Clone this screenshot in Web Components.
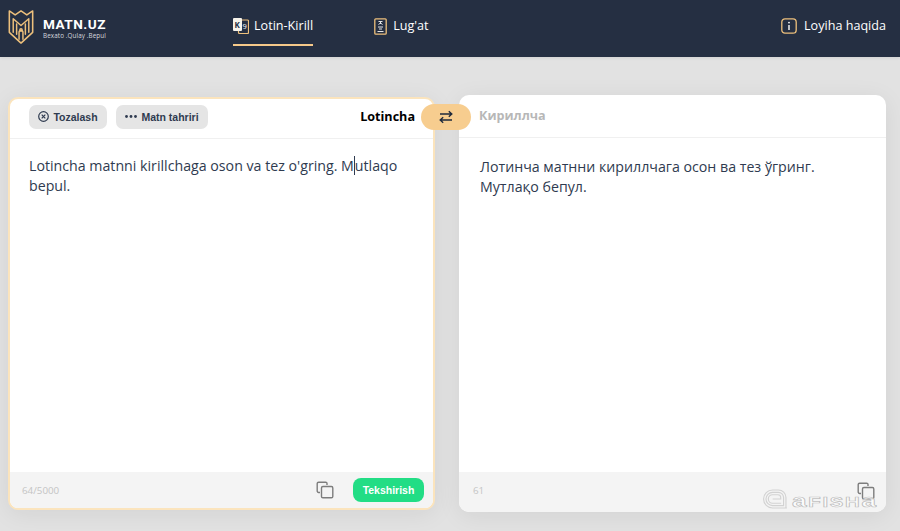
<!DOCTYPE html>
<html lang="uz"><head><meta charset="utf-8"><title>Matn.uz</title>
<style>
html,body{margin:0;height:531px;overflow:hidden}
body{background:#e2e2e2;font-family:"Open Sans","Noto Sans",sans-serif}
</style></head><body>
<app-shell>
  <site-header></site-header>
  <main-area>
    <text-card active count="64/5000" title-text="Lotincha" tools check><span>Lotincha matnni kirillchaga oson va tez o'gring. M</span><text-caret></text-caret><span>utlaqo</span><br><span>bepul.</span></text-card>
    <text-card count="61" title-text="Кириллча">Лотинча матнни кириллчага осон ва тез ўгринг. Мутлақо бепул.</text-card>
    <swap-button></swap-button>
  </main-area>
  <afisha-mark></afisha-mark>
</app-shell>
<script>
function def(name,html){customElements.define(name,class extends HTMLElement{constructor(){super();this.attachShadow({mode:'open'}).innerHTML=typeof html==='function'?html(this):html;}})}
def('app-shell',`<style>:host{display:flex;flex-direction:column;position:relative;width:900px;height:531px;overflow:hidden}</style><slot></slot>`);
const gold='#edc07c';
def('site-header',`<style>
:host{display:flex;align-items:center;height:57px;background:#252f42;color:#fff;flex:none;box-sizing:border-box;padding-left:8px;padding-right:14px;box-shadow:0 1px 3px rgba(0,0,0,.08)}
.logo{display:flex;align-items:center;gap:9px;width:225px;flex:none;margin-top:-3px}
.name{font:700 13.600px/14px Roboto,"Open Sans",sans-serif;letter-spacing:.5px;margin-top:1px}
.tag{font:400 6.300px/7px "Open Sans",sans-serif;color:#d5d8de;letter-spacing:.1px;white-space:nowrap;margin-top:1px}
nav{display:flex;flex:1}
a{display:flex;align-items:center;gap:5px;font:400 12.600px/18px "Open Sans",sans-serif;color:#fff;position:relative;height:57px;box-sizing:border-box;padding-bottom:5px}
a.on::after{content:"";position:absolute;left:0;right:0;bottom:11px;height:2px;background:#f6c98a}
a.l2{margin-left:61px;gap:6px}
a.info{gap:7px}
svg{display:block;flex:none}
</style>
<div class="logo">
<svg width="26" height="36" viewBox="0 0 26 37" fill="none" stroke="${gold}" stroke-width="1.500" stroke-linejoin="round" stroke-linecap="round">
<path d="M1 2 L7 6 L13 2 L19 6 L25 2 V24 L13 35 L1 24 Z" stroke-width="1.600"/>
<path d="M5 24 V10 L13 17 L21 10 V24"/><path d="M8.500 26 V15.500 M17.500 26 V15.500"/>
<path d="M11 31 V24 A2 2 0 0 1 15 24 V31"/><circle cx="13" cy="21.500" r="1.200"/>
</svg>
<div><div class="name">MATN.UZ</div><div class="tag">Bexato .Qulay .Bepul</div></div>
</div>
<nav>
<a class="on"><svg width="16" height="16" viewBox="0 0 16 16"><rect x="5.500" y="2" width="10" height="13.500" rx="1" fill="#252f42" stroke="${gold}" stroke-width="1.200"/><rect x="0" y="0" width="9" height="13" rx="1" fill="#f7f3ea"/><text x="1.500" y="10" font-size="8" font-weight="700" font-family="Open Sans" fill="#252f42">K</text><text x="9.500" y="11" font-size="7.500" font-family="Open Sans" fill="#fff">9</text></svg>Lotin-Kirill</a>
<a class="l2"><svg width="13" height="17" viewBox="0 0 13 17"><rect x=".8" y=".8" width="11.400" height="15.400" rx="1" fill="#252f42" stroke="${gold}" stroke-width="1.300"/><path d="M4.500 3.500h4M6.500 3v3M4.500 6.500L6.500 5l2 1.500M4 9h5M5 11h3M3.500 13.500h6" stroke="#e6e6e6" stroke-width="1" fill="none"/></svg>Lug'at</a>
</nav>
<a class="info"><svg width="16" height="16" viewBox="0 0 16 16" fill="none"><rect x=".8" y=".8" width="14.400" height="14.400" rx="3.200" stroke="${gold}" stroke-width="1.300"/><path d="M8 7v5" stroke="#fff" stroke-width="1.400"/><circle cx="8" cy="4.600" r=".9" fill="#fff"/></svg>Loyiha haqida</a>`);
def('main-area',`<style>:host{display:flex;align-items:stretch;position:relative;gap:24px;padding:38px 14px 19px 8px;flex:1;min-height:0;box-sizing:border-box}</style><slot></slot>`);
def('text-card',h=>{
const active=h.hasAttribute('active'),tools=h.hasAttribute('tools'),check=h.hasAttribute('check'),t=h.getAttribute('title-text');
return `<style>
:host{display:flex;flex-direction:column;flex:none;box-sizing:border-box;background:#fff;border-radius:10px;overflow:hidden;box-shadow:0 4px 24px rgba(0,0,0,.07);width:427px}
:host([active]){margin-top:2px;margin-bottom:2px;border:2px solid #fbe4bd}
.top{height:43px;flex:none;display:flex;align-items:center;border-bottom:1px solid #f0f0f0;box-sizing:border-box;padding:0 20px;gap:9px}
:host([active]) .top{height:40px;padding:0 18px 4px 19px}
button{all:unset;display:flex;align-items:center;justify-content:center;gap:4px;height:24px;border-radius:7px;background:#e5e5e5;color:#2f3b50;font:700 10.500px "Liberation Sans",sans-serif;box-sizing:border-box;width:78px}
button.m{width:92px}
h2{margin:0;font:700 12.600px/18px "Open Sans",sans-serif}
.ttl{margin-left:auto;color:#000}
.ttr{color:#b7b7b7}
.body{flex:1;padding:${active?'17px 19px':'19px 21px'};font:400 14.200px/20px "Open Sans",sans-serif;color:#2f3b50}
.foot{height:${active?36:40}px;flex:none;background:#f4f4f4;display:flex;align-items:center;box-sizing:border-box;padding:0 ${active?'9px 0 12px':'11px 3px 14px'}}
.c{font:400 9.800px "Open Sans",sans-serif;color:#c4c4c4;flex:1}
.chk{all:unset;background:#22dd85;color:#fff;font:700 10.500px "Liberation Sans",sans-serif;border-radius:8px;width:71px;height:24px;display:flex;align-items:center;justify-content:center;margin-left:19px}
svg{display:block;flex:none}
</style>
<div class="top">
${tools?`<button><svg width="11" height="11" viewBox="0 0 11 11" fill="none" stroke="#2f3b50" stroke-width="1.200"><circle cx="5.500" cy="5.500" r="4.800"/><path d="M3.700 3.700l3.600 3.600M7.300 3.700L3.700 7.300"/></svg>Tozalash</button><button class="m"><svg width="12" height="3" viewBox="0 0 12 3" fill="#2f3b50"><circle cx="1.500" cy="1.500" r="1.400"/><circle cx="6" cy="1.500" r="1.400"/><circle cx="10.500" cy="1.500" r="1.400"/></svg>Matn tahriri</button><h2 class="ttl">${t}</h2>`:`<h2 class="ttr">${t}</h2>`}
</div>
<div class="body"><slot></slot></div>
<div class="foot"><span class="c">${h.getAttribute('count')}</span>
<svg width="18" height="18" viewBox="0 0 18 18" fill="none" stroke="#7d7d7d" stroke-width="1.400"><path d="M4 11.500H2.600A1.400 1.400 0 0 1 1.200 10.100V2.600A1.400 1.400 0 0 1 2.600 1.200H9.600A1.400 1.400 0 0 1 11 2.600V4"/><rect x="5.500" y="5.500" width="11.300" height="11.300" rx="1.400"/></svg>
${check?'<button class="chk">Tekshirish</button>':''}</div>`});
def('text-caret',`<style>:host{display:inline-block;width:0;height:19px;vertical-align:-4px;border-left:1px solid #2f3b50}</style>`);
def('swap-button',`<style>:host{position:absolute;left:421px;top:47px;width:50px;height:26px;border-radius:13px;background:#f7cd8f;display:flex;align-items:center;justify-content:center}</style>
<svg width="14" height="14" viewBox="0 0 14 14" fill="none" stroke="#1f2a3c" stroke-width="1.400"><path d="M1 4H12.500M9.800 1.200L12.800 4 9.800 6.800M13 10H1.500M4.200 7.200L1.200 10 4.200 12.800"/></svg>`);
def('afisha-mark',`<style>:host{position:absolute;left:762px;top:489px;display:flex;align-items:flex-end;pointer-events:none}
span{font:700 14px/14px "Liberation Sans",sans-serif;letter-spacing:1.200px;color:rgba(255,255,255,.7);-webkit-text-stroke:.7px rgba(180,180,180,.85);margin-left:4px;transform:scaleX(1.450);transform-origin:left;display:block;white-space:nowrap}
b{font-size:18px;font-weight:700;line-height:14px}
</style><svg width="26" height="20" viewBox="0 0 27 21" fill="none" stroke="#d2d2d2" stroke-width="1.200"><path d="M26 20H11A9.500 9.500 0 0 1 11 1H17A8 8 0 0 1 25 9V20"/><path d="M22.500 17.500H11A7 7 0 0 1 11 3.500H17A5.500 5.500 0 0 1 22.500 9V17.500Z"/><path d="M20 15H11A4.500 4.500 0 0 1 11 6H16.500A3 3 0 0 1 19.500 9V10.500H11"/></svg><span><b>a</b>FISH<b>a</b></span>`);
</script>
</body></html>
